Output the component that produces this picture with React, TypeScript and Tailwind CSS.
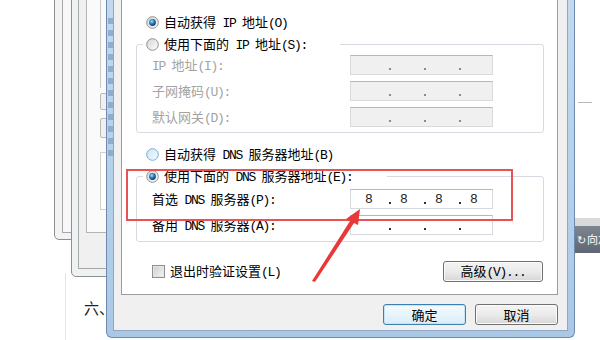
const CJK = /([\u2E80-\u9FFF\uFF00-\uFFEF]+)/;

function T({ s }: { s: string }) {
  return (
    <span className="whitespace-pre">
      {s.split(CJK).map((p, i) =>
        i % 2 === 1 ? (
          <span key={i} className="font-['Noto_Sans_CJK_SC',sans-serif]">{p}</span>
        ) : p ? (
          <span key={i} className="font-['Liberation_Mono',monospace] tracking-[-1.3px]">{p}</span>
        ) : null
      )}
    </span>
  );
}

function Radio({ variant }: { variant: "on" | "off" | "hover" }) {
  return (
    <svg width="13" height="13" viewBox="0 0 13 13" className="shrink-0">
      <defs>
        <linearGradient id={`ring-${variant}`} x1="0" y1="0" x2="1" y2="1">
          <stop offset="0%" stopColor={variant === "hover" ? "#c9e6f7" : "#d6d6d6"} />
          <stop offset="100%" stopColor={variant === "hover" ? "#f4fbff" : "#fdfdfd"} />
        </linearGradient>
        <radialGradient id={`dot-${variant}`} cx="40%" cy="35%" r="65%">
          <stop offset="0%" stopColor="#a9e4ff" />
          <stop offset="45%" stopColor="#2f8cc8" />
          <stop offset="100%" stopColor="#0c3a66" />
        </radialGradient>
      </defs>
      <circle cx="6.5" cy="6.5" r="5.8" fill={`url(#ring-${variant})`} stroke={variant === "hover" ? "#7ea9c9" : "#8e8f8f"} />
      {variant === "on" && <circle cx="6.5" cy="6.5" r="3.4" fill="url(#dot-on)" />}
    </svg>
  );
}

function IpBox({ value, disabled }: { value?: string[]; disabled?: boolean }) {
  const parts = value ?? ["", "", "", ""];
  return (
    <div
      className={`flex h-[20px] w-[143px] items-center border border-t-[#b5b7bd] pl-[11px] ${
        disabled ? "border-[#dadada] bg-[#f0f0f0]" : "border-[#d6d9de] bg-white"
      }`}
    >
      {parts.map((p, i) => (
        <div key={i} className="flex items-center">
          {i > 0 && <div className="ml-[6px]" />}
          <span className="w-[14px] text-center font-['Liberation_Mono',monospace] text-[13px] leading-[17px] text-[#222]">
            {p}
          </span>
          {i < 3 && (
            <div className={`ml-[13px] mt-[7px] h-[2px] w-[2px] ${disabled ? "bg-[#8a8a8a]" : "bg-[#333]"}`} />
          )}
        </div>
      ))}
    </div>
  );
}

function Field({ label, value, disabled }: { label: string; value?: string[]; disabled?: boolean }) {
  return (
    <div className="flex h-[20px] items-center">
      <div className={`w-[213px] pl-[15px] ${disabled ? "text-[#a3a3a3]" : "text-black"}`}>
        <T s={label} />
      </div>
      <IpBox value={value} disabled={disabled} />
    </div>
  );
}

function WinButton({ label, primary, className }: { label: string; primary?: boolean; className?: string }) {
  return (
    <div
      className={`flex h-[21px] items-center justify-center rounded-[3px] border text-[13px] text-black ${
        primary
          ? "border-[#3c7fb1] bg-gradient-to-b from-[#f5fbfe] to-[#d9edf8] shadow-[inset_0_0_0_1px_#c5e5f7]"
          : "border-[#707070] bg-gradient-to-b from-[#f4f4f4] via-[#ebebeb] to-[#d6d6d6] shadow-[inset_0_0_0_1px_#fbfbfb]"
      } ${className ?? ""}`}
    >
      <T s={label} />
    </div>
  );
}

export default function App() {
  return (
    <div className="relative h-[340px] w-[600px] overflow-hidden bg-white text-[13px] leading-[17px]">
      {/* desktop windows behind */}
      <div className="absolute left-[65px] top-[273px] h-[80px] w-px bg-[#e6e6e6]" />
      <div className="absolute left-[54px] top-[-10px] h-[250px] w-[120px] rounded-bl-[5px] border border-[#8f8f8f] bg-[#f1f3f4]" />
      <div className="absolute left-[62px] top-[-10px] h-[243px] w-[100px] border-b border-l border-[#a8a8a8] bg-[#f8f8f8]" />
      <div className="absolute left-[71px] top-[-10px] h-[287px] w-[100px] rounded-bl-[5px] border border-[#8f8f8f] bg-[#edf2f2]" />
      <div className="absolute left-[78px] top-[-10px] h-[279px] w-[100px] border-b border-l border-[#a8a8a8] bg-[#f0f0f0]" />
      <div className="absolute left-[86px] top-[-10px] h-[243px] w-[100px] border-b border-l border-[#b4b4b4] bg-[#fafafa]" />
      <div className="absolute left-[100px] top-[-10px] h-[98px] w-px bg-[#c8c8c8]" />
      <div className="absolute left-[100px] top-[93px] h-[17px] w-[12px] rounded-[2px] border border-[#b9b9b9] bg-[#f0f0f0]" />
      <div className="absolute left-[100px] top-[118px] h-[20px] w-[12px] rounded-[2px] border border-[#b9b9b9] bg-[#f0f0f0]" />
      <div className="absolute left-[100px] top-[152px] h-[58px] w-[12px] border border-[#d0d0d0] bg-white" />
      <div className="absolute left-[84px] top-[299px] font-['Noto_Sans_CJK_SC',sans-serif] text-[15px] text-[#222]">六、</div>

      {/* right side background */}
      <div className="absolute left-[578px] top-[102px] h-px w-[14px] bg-[#b8b8b8]" />
      <div className="absolute left-[574px] top-[218px] flex h-[35px] w-[30px] flex-col overflow-hidden">
        <div className="h-[8px] bg-[#d9d9d9]" />
        <div className="flex flex-1 items-center gap-[1px] whitespace-nowrap bg-gradient-to-b from-[#7d8690] to-[#5f6872] pl-[3px] font-['Noto_Sans_CJK_SC',sans-serif] text-[11px] text-white">
          <span>↻</span>
          <span>向左</span>
        </div>
      </div>

      {/* dialog window */}
      <div className="absolute left-[106px] top-0 h-[338px] w-[469px] rounded-b-[6px] border-x border-b border-[#6c8aad] bg-gradient-to-b from-[#c2d9ef] to-[#aac8e6] px-[6px] pb-[6px]">
        <div className="absolute left-[1px] top-[18px] h-[142px] w-[5px] bg-[repeating-linear-gradient(to_bottom,#7c9cc2_0_6px,transparent_6px_12px)] opacity-70" />
        <div className="flex h-full flex-col border-x border-b border-[#8ea7c4] bg-[#f0f0f0] pl-[7px] pr-[9px]">
          <div className="flex h-[295px] flex-col border-x border-b border-[#9a9ca2] bg-white">
            <div className="ml-[24px] mt-[14px] flex h-[17px] items-center gap-[5px]">
              <Radio variant="on" />
              <T s="自动获得 IP 地址(O)" />
            </div>

            <div className="ml-[14px] mt-[13px] w-[408px] rounded-[3px] border border-[#d5dbe0] pb-[5px]">
              <div className="-mt-[9px] ml-[6px] flex h-[17px] w-[197px] items-center gap-[5px] bg-white pl-[3px]">
                <Radio variant="off" />
                <T s="使用下面的 IP 地址(S):" />
              </div>
              <div className="mt-[2px] flex flex-col gap-[6px]">
                <Field label="IP 地址(I):" disabled />
                <Field label="子网掩码(U):" disabled />
                <Field label="默认网关(D):" disabled />
              </div>
            </div>

            <div className="ml-[24px] mt-[13px] flex h-[17px] items-center gap-[5px]">
              <Radio variant="hover" />
              <T s="自动获得 DNS 服务器地址(B)" />
            </div>

            <div className="ml-[14px] mt-[13px] w-[408px] rounded-[3px] border border-[#d5dbe0] pb-[6px]">
              <div className="-mt-[9px] ml-[6px] flex h-[17px] w-[244px] items-center gap-[5px] bg-white pl-[3px]">
                <Radio variant="on" />
                <T s="使用下面的 DNS 服务器地址(E):" />
              </div>
              <div className="mt-[4px] flex flex-col gap-[6px]">
                <Field label="首选 DNS 服务器(P):" value={["8", "8", "8", "8"]} />
                <Field label="备用 DNS 服务器(A):" />
              </div>
            </div>

            <div className="mt-[19px] flex h-[21px] items-center justify-between pl-[30px] pr-[14px]">
              <div className="flex items-center gap-[5px]">
                <div className="h-[13px] w-[13px] border border-[#8e8f8f] bg-gradient-to-br from-[#cfcfcf] to-[#f4f4f4] shadow-[inset_0_0_0_1px_#e6e6e6]" />
                <T s="退出时验证设置(L)" />
              </div>
              <WinButton label="高级(V)..." className="w-[100px]" />
            </div>
          </div>

          <div className="flex justify-end gap-[9px] pt-[9px]">
            <WinButton label="确定" primary className="w-[83px]" />
            <WinButton label="取消" className="w-[83px]" />
          </div>
        </div>
      </div>

      {/* annotation */}
      <div className="absolute left-[126px] top-[169px] h-[52px] w-[387px] border-2 border-[#e85252]" />
      <svg className="absolute left-[300px] top-[200px]" width="70" height="90" viewBox="0 0 70 90">
        <polygon points="60,9 46,19 50,21 12,81 15,82 54,23 58,25" fill="#e83838" />
      </svg>
    </div>
  );
}
